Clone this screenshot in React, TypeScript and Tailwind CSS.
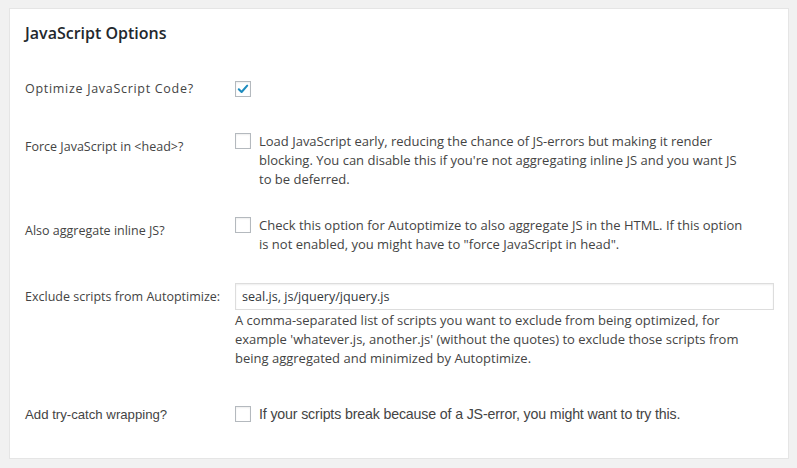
import React from "react";

const Box = ({ checked = false }: { checked?: boolean }) => (
  <span className="flex h-4 w-4 shrink-0 items-center justify-center border border-[#b4b9be] bg-white shadow-[inset_0_1px_2px_rgba(0,0,0,0.07)]">
    {checked && (
      <svg viewBox="0 0 16 16" className="h-[14px] w-[14px]">
        <path d="M3.2 8.3 L6.4 11.4 L12.8 4.2" fill="none" stroke="#1e8cbe" strokeWidth="2.4" strokeLinecap="round" strokeLinejoin="round" />
      </svg>
    )}
  </span>
);

const Lines = ({ lines }: { lines: string[] }) => (
  <div className="text-[13px]">
    {lines.map((l) => (
      <span key={l} className="block whitespace-nowrap">
        {l}
      </span>
    ))}
  </div>
);

export default function App() {
  return (
    <div className="h-screen w-full bg-[#f1f1f1] pl-[9px] pt-[8px] font-['Open_Sans',sans-serif] text-[12.5px] leading-[19px] text-[#444]">
      <div className="h-[451px] w-[780px] border border-[#e5e5e5] bg-white pl-[15px] pt-[12px]">
        <h2 className="text-[16px] font-semibold leading-[24px] text-[#23282d]">JavaScript Options</h2>

        {/* optimize */}
        <div className="mt-[34px] flex items-start">
          <div className="w-[210px] shrink-0 tracking-[0.7px]">Optimize JavaScript Code?</div>
          <div className="mt-[2px]">
            <Box checked />
          </div>
        </div>

        {/* force in head */}
        <div className="mt-[34px] flex items-start">
          <div className="w-[210px] shrink-0 pt-[5px]">Force JavaScript in &lt;head&gt;?</div>
          <div className="flex gap-2">
            <div className="mt-[1px]">
              <Box />
            </div>
            <Lines
              lines={[
                "Load JavaScript early, reducing the chance of JS-errors but making it render",
                "blocking. You can disable this if you're not aggregating inline JS and you want JS",
                "to be deferred.",
              ]}
            />
          </div>
        </div>

        {/* inline */}
        <div className="mt-[27px] flex items-start">
          <div className="w-[210px] shrink-0 pt-[5px]">Also aggregate inline JS?</div>
          <div className="flex gap-2">
            <div className="mt-[1px]">
              <Box />
            </div>
            <Lines
              lines={[
                "Check this option for Autoptimize to also aggregate JS in the HTML. If this option",
                "is not enabled, you might have to \"force JavaScript in head\".",
              ]}
            />
          </div>
        </div>

        {/* exclude */}
        <div className="mt-[29px] flex items-start">
          <div className="w-[210px] shrink-0 pt-[4px]">Exclude scripts from Autoptimize:</div>
          <div className="w-[539px]">
            <input
              readOnly
              value="seal.js, js/jquery/jquery.js"
              className="h-[27px] w-full border border-[#dddddd] bg-white px-[6px] text-[12.6px] text-[#32373c] shadow-[inset_0_1px_2px_rgba(0,0,0,0.07)] outline-none"
            />
            <div className="mt-[1px]">
              <Lines
                lines={[
                  "A comma-separated list of scripts you want to exclude from being optimized, for",
                  "example 'whatever.js, another.js' (without the quotes) to exclude those scripts from",
                  "being aggregated and minimized by Autoptimize.",
                ]}
              />
            </div>
          </div>
        </div>

        {/* try catch */}
        <div className="mt-[37px] flex items-start font-['Liberation_Sans',sans-serif] text-[13.2px]">
          <div className="w-[210px] shrink-0">Add try-catch wrapping?</div>
          <div className="flex gap-2">
            <div className="mt-[1px]">
              <Box />
            </div>
            <span className="whitespace-nowrap text-[14.2px] tracking-[-0.15px]">
              If your scripts break because of a JS-error, you might want to try this.
            </span>
          </div>
        </div>
      </div>
    </div>
  );
}
